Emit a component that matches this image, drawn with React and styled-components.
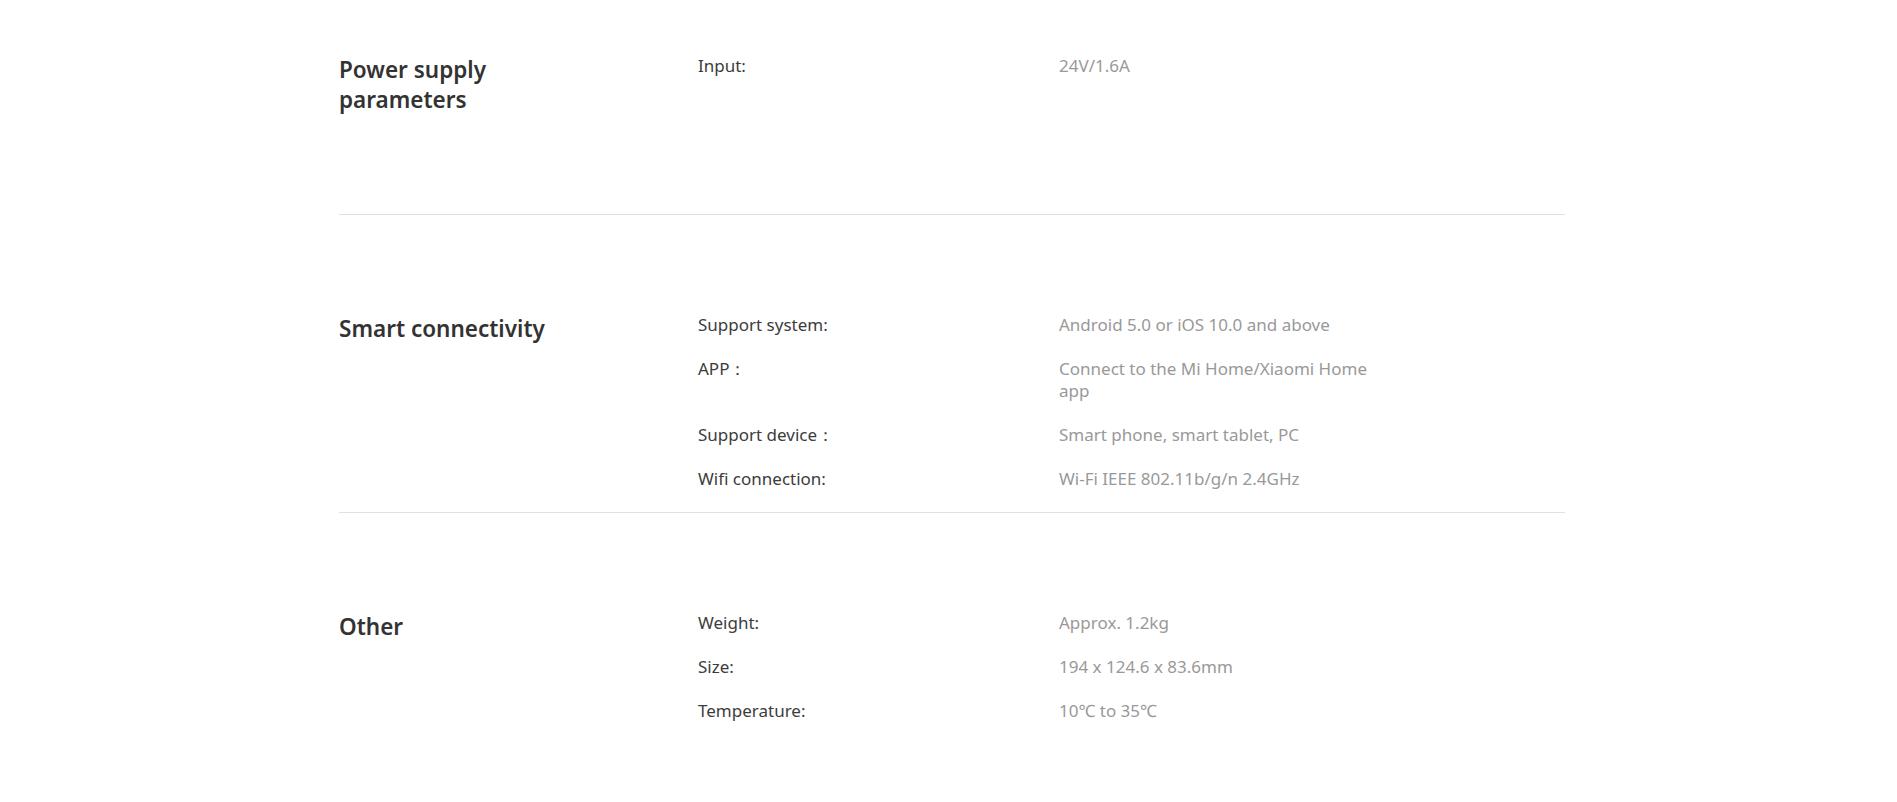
import React from "react";
import styled, { createGlobalStyle } from "styled-components";

const GlobalStyle = createGlobalStyle`
  html, body {
    margin: 0;
    padding: 0;
    background: #fff;
  }
  body {
    font-family: "Noto Sans", "Open Sans", sans-serif;
    -webkit-font-smoothing: antialiased;
  }
`;

const Page = styled.div`
  width: 1226px;
  margin-left: 339px;
`;

const Section = styled.section`
  display: grid;
  grid-template-columns: 359px 1fr;
  align-items: start;
  padding-top: ${(p) => (p.first ? "55px" : "99px")};
  border-bottom: ${(p) => (p.last ? "none" : "1px solid #e0e0e0")};
`;

const Heading = styled.h3`
  margin: 0;
  font-size: 22.5px;
  line-height: 30px;
  font-weight: 600;
  color: #333;
  max-width: 240px;
  min-height: 159px;
`;

const Rows = styled.dl`
  display: flex;
  flex-direction: column;
  margin: 0;
`;

const Row = styled.div`
  display: grid;
  grid-template-columns: 361px 1fr;
  margin-bottom: 22px;
  font-size: 17px;
  line-height: 22px;
`;

const Label = styled.dt`
  margin: 0;
  color: #3c3c3c;
`;

const Value = styled.dd`
  margin: 0;
  color: #999;
  max-width: 330px;
`;

const specs = [
  {
    title: "Power supply parameters",
    items: [["Input:", "24V/1.6A"]],
  },
  {
    title: "Smart connectivity",
    items: [
      ["Support system:", "Android 5.0 or iOS 10.0 and above"],
      ["APP：", "Connect to the Mi Home/Xiaomi Home app"],
      ["Support device：", "Smart phone, smart tablet, PC"],
      ["Wifi connection:", "Wi-Fi IEEE 802.11b/g/n 2.4GHz"],
    ],
  },
  {
    title: "Other",
    items: [
      ["Weight:", "Approx. 1.2kg"],
      ["Size:", "194 x 124.6 x 83.6mm"],
      ["Temperature:", "10℃ to 35℃"],
    ],
  },
];

export default function App() {
  return (
    <>
      <GlobalStyle />
      <Page>
        {specs.map((s, i) => (
          <Section key={s.title} first={i === 0} last={i === specs.length - 1}>
            <Heading>{s.title}</Heading>
            <Rows>
              {s.items.map(([k, v]) => (
                <Row key={k}>
                  <Label>{k}</Label>
                  <Value>{v}</Value>
                </Row>
              ))}
            </Rows>
          </Section>
        ))}
      </Page>
    </>
  );
}
